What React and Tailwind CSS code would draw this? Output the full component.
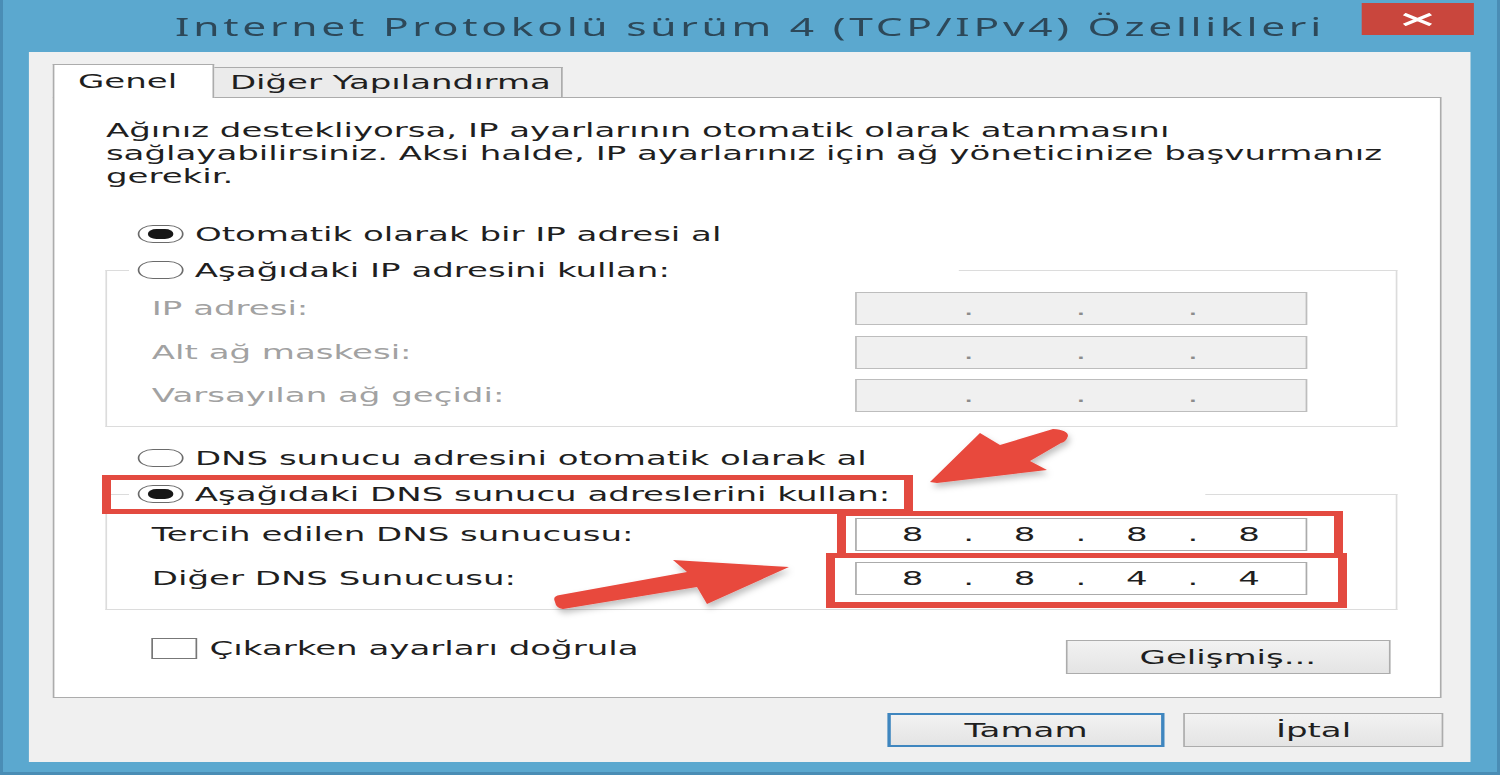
import { Fragment } from "react";

// Ellipse-shaped radio button (the whole dialog is stretched horizontally)
const Radio = ({ checked }) => (
  <span className="flex h-[18px] w-[26.5px] shrink-0 items-center justify-center rounded-full border-[1.5px] border-[#6b6b6b] bg-white">
    {checked && <span className="h-[10px] w-[15px] rounded-full bg-[#161616]" />}
  </span>
);

const IpBox = ({ parts = ["", "", "", ""], disabled }) => (
  <div
    className={`flex h-[33px] w-[266px] items-center border ${
      disabled
        ? "border-[#bdbdbd] bg-[#f0f0f0] text-[#8c8c8c]"
        : "border-[#ababab] bg-white text-[#1f1f1f]"
    }`}
  >
    {parts.map((p, i) => (
      <Fragment key={i}>
        {i > 0 && <span className="flex w-0 justify-center">.</span>}
        <span className="flex-1 text-center">{p}</span>
      </Fragment>
    ))}
  </div>
);

const GroupCaption = ({ width, checked, children }) => (
  <div className="flex h-[24px]">
    <div className="h-[12px] w-[14.15px] self-end border-l border-t border-[#dcdcdc]" />
    <div className="flex items-center gap-[7px] bg-white pl-[4.7px]" style={{ width }}>
      <Radio checked={checked} />
      <span className="whitespace-nowrap">{children}</span>
    </div>
    <div className="h-[12px] flex-1 self-end border-r border-t border-[#dcdcdc]" />
  </div>
);

const Button = ({ children, primary, className = "" }) => (
  <div
    className={`flex h-[34px] items-center justify-center bg-gradient-to-b from-[#f2f2f2] to-[#e4e4e4] text-[#1f1f1f] ${
      primary ? "border-2 border-[#3f86bf]" : "border border-[#acacac]"
    } ${className}`}
  >
    {children}
  </div>
);

export default function App() {
  return (
    <div className="h-[775px] w-[1500px] overflow-hidden bg-[#5ba8cf] shadow-[inset_3px_0_0_#4a8db5,inset_-3px_0_0_#4a8db5,inset_0_-3px_0_#4a8db5] font-['DejaVu_Sans',sans-serif] text-[20px] leading-[23px] text-[#1f1f1f]">
      <div className="relative flex h-[775px] w-[882.35px] origin-top-left scale-x-[1.7] flex-col">
        {/* title bar */}
        <div className="relative flex h-[52px] shrink-0 items-center justify-center">
          <span className="whitespace-nowrap font-['Noto_Sans',sans-serif] text-[25px] tracking-[2.2px] text-[#2d4859]">
            Internet Protokolü sürüm 4 (TCP/IPv4) Özellikleri
          </span>
          <div className="absolute right-[15.35px] top-[3px] flex h-[32px] w-[65.9px] items-center justify-center bg-[#c9463d]">
            <svg width="17.6" height="13" viewBox="0 0 17.6 13">
              <path d="M1 1 L16.6 12 M16.6 1 L1 12" stroke="#fff" strokeWidth="2.8" />
            </svg>
          </div>
        </div>

        {/* client area */}
        <div className="ml-[17.06px] mr-[17.65px] flex h-[710px] flex-col bg-[#f0f0f0] pl-[13.5px] pt-[12px]">
          <div className="flex h-[33px] items-end">
            <div className="relative z-10 -mb-px flex h-[34px] w-[95.3px] items-center border border-b-0 border-[#acacac] bg-white pl-[14.3px]">
              Genel
            </div>
            <div className="flex h-[30px] w-[205.3px] items-center border border-b-0 border-l-0 border-[#acacac] bg-[#ebebeb] pl-[9.4px]">
              Diğer Yapılandırma
            </div>
          </div>

          <div className="flex h-[601px] w-[817px] flex-col border border-[#acacac] bg-white pl-[30.75px] pr-[24.2px]">
            <p className="mt-[20.5px] whitespace-nowrap">
              Ağınız destekliyorsa, IP ayarlarının otomatik olarak atanmasını
              <br />
              sağlayabilirsiniz. Aksi halde, IP ayarlarınız için ağ yöneticinize başvurmanız
              <br />
              gerekir.
            </p>

            <div className="mt-[34.5px] flex h-[24px] items-center gap-[7px] pl-[18.85px]">
              <Radio checked />
              <span>Otomatik olarak bir IP adresi al</span>
            </div>

            {/* static IP group */}
            <div className="mt-[12px]">
              <GroupCaption width="488px">Aşağıdaki IP adresini kullan:</GroupCaption>
              <div className="flex h-[145px] flex-col gap-[10.5px] border-x border-b border-[#dcdcdc] pl-[26px] pr-[52.6px] pt-[10px] text-[#a2a2a2]">
                {["IP adresi:", "Alt ağ maskesi:", "Varsayılan ağ geçidi:"].map((label) => (
                  <div key={label} className="flex items-center justify-between">
                    <span>{label}</span>
                    <IpBox disabled />
                  </div>
                ))}
              </div>
            </div>

            <div className="mt-[19px] flex h-[24px] items-center gap-[7px] pl-[18.85px]">
              <Radio />
              <span>DNS sunucu adresini otomatik olarak al</span>
            </div>

            {/* DNS group */}
            <div className="mt-[12px]">
              <GroupCaption width="632.3px" checked>
                Aşağıdaki DNS sunucu adreslerini kullan:
              </GroupCaption>
              <div className="flex h-[104px] flex-col gap-[11px] border-x border-b border-[#dcdcdc] pl-[26px] pr-[52.6px] pt-[12px]">
                <div className="flex items-center justify-between">
                  <span>Tercih edilen DNS sunucusu:</span>
                  <IpBox parts={["8", "8", "8", "8"]} />
                </div>
                <div className="flex items-center justify-between">
                  <span>Diğer DNS Sunucusu:</span>
                  <IpBox parts={["8", "8", "4", "4"]} />
                </div>
              </div>
            </div>

            <div className="mt-[30px] flex h-[34px] items-center justify-between pl-[27px] pr-[4.8px]">
              <div className="mb-[18px] flex items-center gap-[7px]">
                <span className="h-[21px] w-[27px] border-[1.5px] border-[#777] bg-white" />
                <span>Çıkarken ayarları doğrula</span>
              </div>
              <Button className="w-[190.6px]">Gelişmiş...</Button>
            </div>
          </div>

          <div className="mt-[15px] flex justify-end gap-[11.2px] pr-[15.3px]">
            <Button primary className="w-[162.4px]">Tamam</Button>
            <Button className="w-[153.5px]">İptal</Button>
          </div>
        </div>

        {/* red highlight boxes and arrows drawn over the dialog */}
        <svg
          className="pointer-events-none absolute inset-0 h-full w-full"
          viewBox="0 0 1500 775"
          preserveAspectRatio="none"
        >
          <defs>
            <filter id="soft" x="-20%" y="-20%" width="140%" height="160%">
              <feDropShadow dx="2" dy="4" stdDeviation="3" floodColor="#000" floodOpacity="0.25" />
            </filter>
          </defs>
          <g fill="#e34a40" fillRule="evenodd">
            <path d="M102 475 H913 V514 H102 Z M111 480 V509 H904 V480 Z" />
            <path d="M837 511 H1343 V558 H837 Z M846 516 V553 H1334 V516 Z" />
            <path d="M826 553 H1347 V608 H826 Z M835 558 V602 H1338 V558 Z" />
          </g>
          <g fill="#e8483e" filter="url(#soft)">
            <path d="M930 482 L980 433 L1000 445 L1053 429 Q1068 430 1068 436 Q1066 442 1061 443 L1030 461 L1047 470 L937 483 Z" />
            <path d="M555 602 Q552 596 560 595 L687 572 L673 560 L789 567 L707 604 L697 587 L563 609 Q556 608 555 602 Z" />
          </g>
        </svg>
      </div>
    </div>
  );
}
